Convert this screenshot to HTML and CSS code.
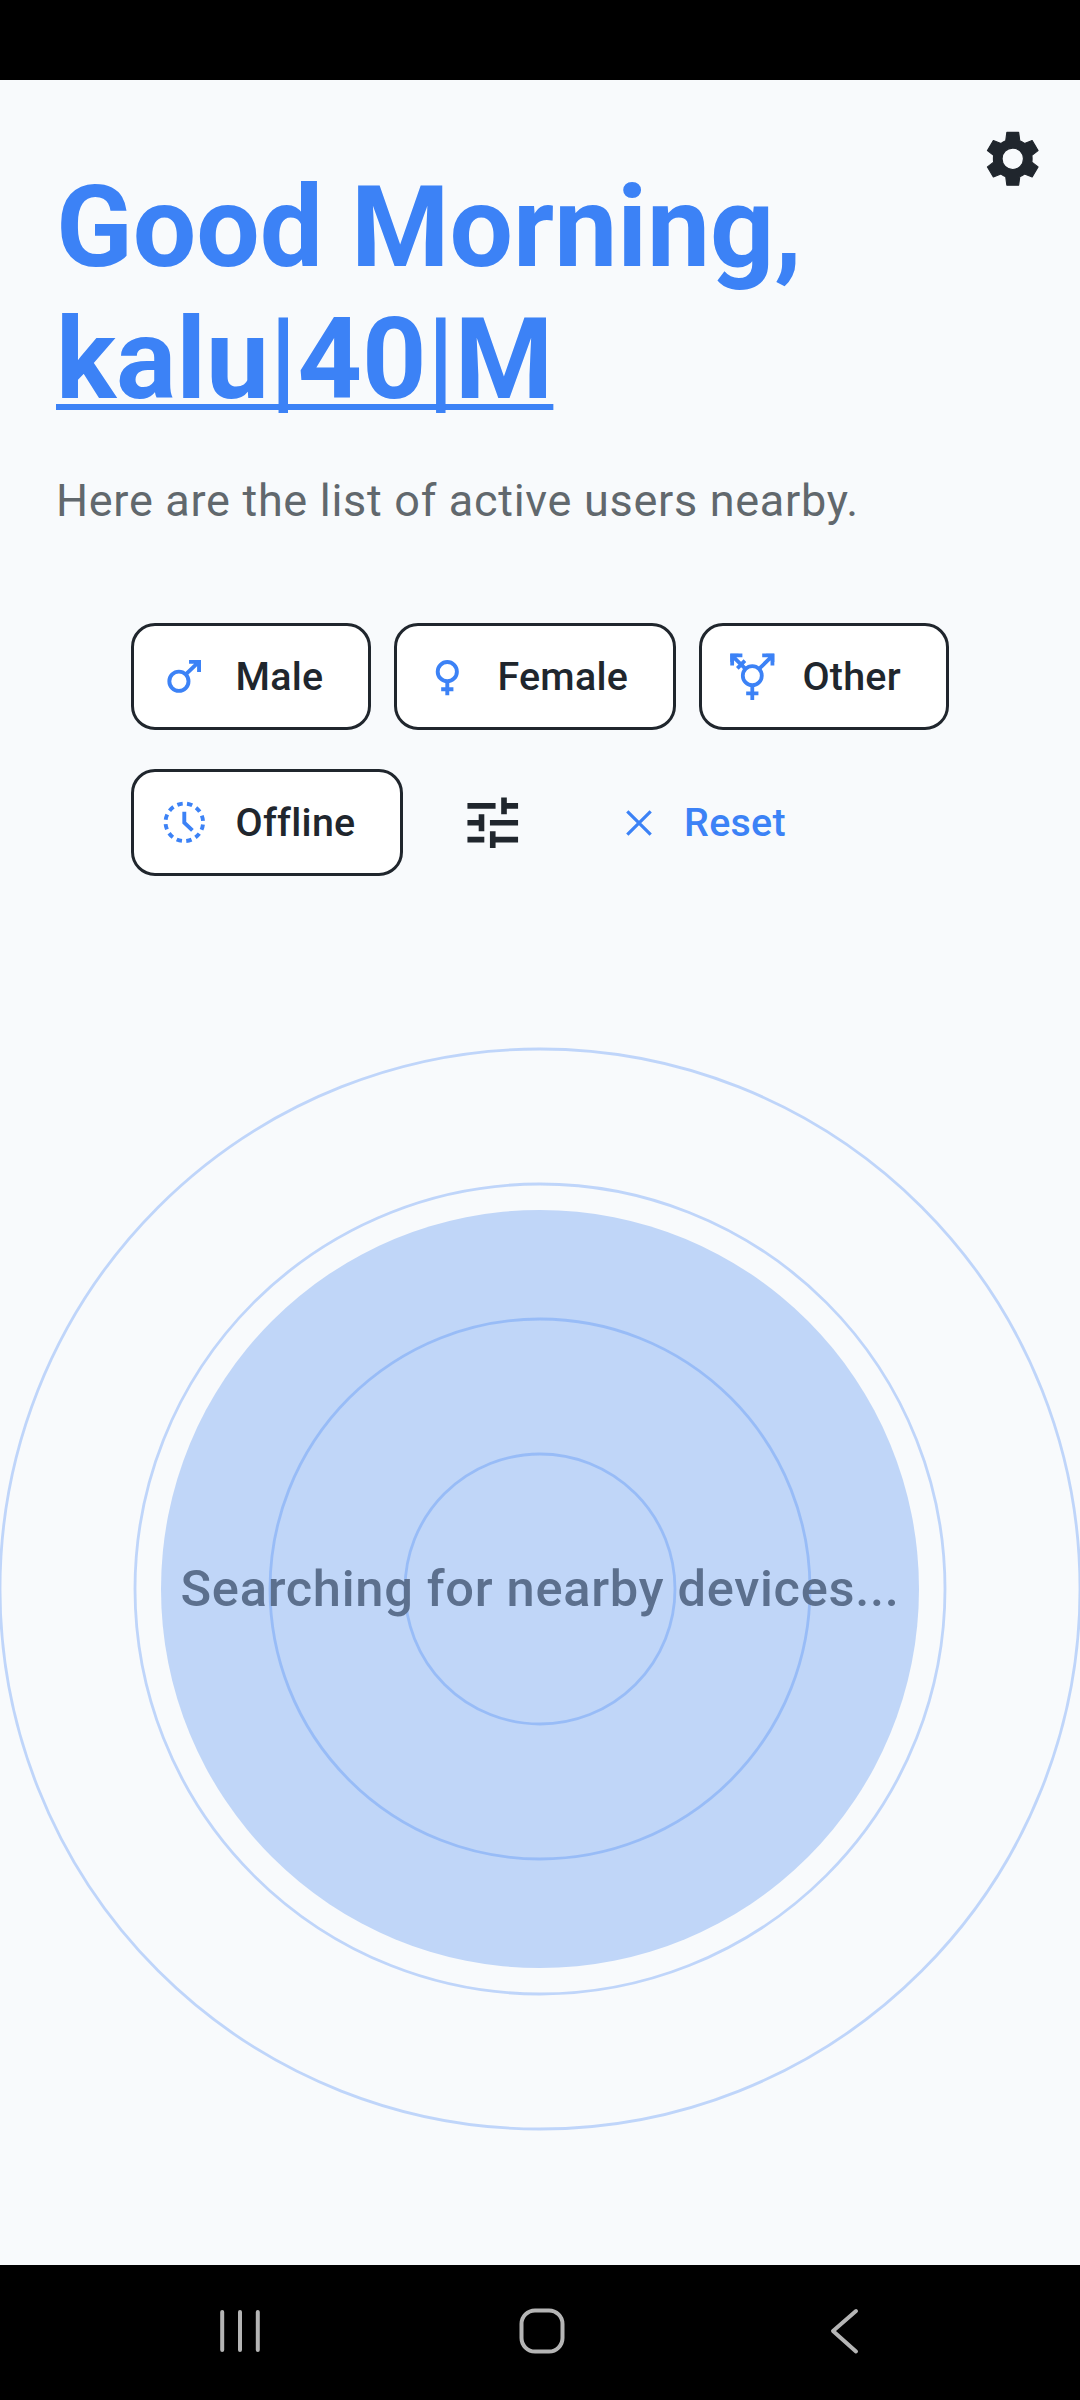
FILE: index.html
```html
<!DOCTYPE html>
<html lang="en">
<head>
<meta charset="utf-8">
<title>Nearby</title>
<link rel="stylesheet" href="styles.css">
</head>
<body>
<div class="status-bar"></div>
<main class="screen">
  <button class="settings" aria-label="Settings">
    <svg viewBox="-12 -12 24 24"><path fill="currentColor" stroke="currentColor" stroke-width=".4" stroke-linejoin="round" fill-rule="evenodd" d="M-2.1-9.4H2.1L2.5-6.4Q3.4-6 4.2-5.4L6.9-6.5L9-2.9L6.8-1.2Q6.95 0 6.8 1.2L9 2.9L6.9 6.5L4.2 5.4Q3.4 6 2.5 6.4L2.1 9.4H-2.1L-2.5 6.4Q-3.4 6-4.2 5.4L-6.9 6.5L-9 2.9L-6.8 1.2Q-6.95 0-6.8-1.2L-9-2.9L-6.9-6.5L-4.2-5.4Q-3.4-6-2.5-6.4ZM0-3.8a3.8 3.8 0 1 0 0 7.6a3.8 3.8 0 1 0 0-7.6Z"/></svg>
  </button>
  <h1 class="greeting">Good Morning,<br><span class="name">kalu|40|M</span></h1>
  <p class="subtitle">Here are the list of active users nearby.</p>
  <div class="filters">
    <div class="filter-row">
      <button class="chip male"><svg class="icon" viewBox="0 0 48 48"><g fill="none" stroke="currentColor" stroke-width="3.7"><circle cx="18.9" cy="28.7" r="9.1"/><path d="M25.4 22.2L38 10M28.5 10.3H38V20"/></g><path fill="currentColor" d="M32 8.5H39.8V16.5Z"/></svg>Male</button>
      <button class="chip female"><svg class="icon" viewBox="0 0 48 48"><g fill="none" stroke="currentColor" stroke-width="3.7"><circle cx="24" cy="19.6" r="9.1"/><path d="M24 28.7V42M18.2 36.3H29.8"/></g></svg>Female</button>
      <button class="chip other"><svg class="icon" viewBox="0 0 48 48"><g fill="none" stroke="currentColor" stroke-width="3.6"><circle cx="24" cy="23.4" r="9"/><path d="M24 32.4V46.4M18.2 40.2H29.8M30.4 17L43 4.6M33.4 4.1H43.1V13.8M17.6 17L5 4.6M14.6 4.1H4.9V13.8M9.8 16.4L17 9.2"/></g><path fill="currentColor" d="M37 2.6H44.9V10.6ZM11 2.6H3.1V10.6Z"/></svg>Other</button>
    </div>
    <div class="filter-row">
      <button class="chip offline"><svg class="icon" viewBox="0 0 48 48"><g fill="none" stroke="currentColor" stroke-width="3.7"><circle cx="24" cy="24" r="17.8" stroke-dasharray="5.1 4.22" stroke-dashoffset="-2.11"/><path d="M24 14V24.3L31.7 31.6"/></g></svg>Offline</button>
      <button class="tune" aria-label="Filters"><svg viewBox="0 0 24 24"><path fill="currentColor" d="M3 17v2h6v-2H3zM3 5v2h10V5H3zm10 16v-2h8v-2h-8v-2h-2v6h2zM7 9v2H3v2h4v2h2V9H7zm14 4v-2H11v2h10zm-6-4h2V7h4V5h-4V3h-2v6z"/></svg></button>
      <button class="reset"><svg viewBox="0 0 26 26"><path d="M1.3 1.3L24.7 24.7M24.7 1.3L1.3 24.7" fill="none" stroke="currentColor" stroke-width="3.2"/></svg>Reset</button>
    </div>
  </div>
  <section class="radar">
    <svg class="rings" viewBox="0 0 1080 1080">
      <circle class="disc" cx="540" cy="540" r="379"/>
      <circle class="ring" cx="540" cy="540" r="135"/>
      <circle class="ring" cx="540" cy="540" r="270"/>
      <circle class="ring" cx="540" cy="540" r="405"/>
      <circle class="ring" cx="540" cy="540" r="540"/>
    </svg>
    <p class="searching">Searching for nearby devices...</p>
  </section>
</main>
<nav class="nav-bar">
  <svg class="recents" viewBox="0 0 44 48"><path d="M2.2 4V42M20 4V42M37.8 4V42"/></svg>
  <svg class="home" viewBox="0 0 46 48"><rect x="2.5" y="2.5" width="41" height="41" rx="13.5"/></svg>
  <svg class="back" viewBox="0 0 30 48"><path d="M26 3L3 23L26 43.5"/></svg>
</nav>
</body>
</html>
```
FILE: styles.css
```css
* { box-sizing: border-box; }
body { margin: 0; width: 1080px; height: 2400px; display: flex; flex-direction: column; font-family: Roboto, sans-serif; background: #000; overflow: hidden; }
h1, p { margin: 0; }
button { font: inherit; border: 0; background: none; padding: 0; color: inherit; }
svg { display: block; flex: none; }
.status-bar { height: 80px; flex: none; background: #000; }
.screen { position: relative; height: 2185px; flex: none; background: #f8fafc; color: #20262d; overflow: hidden; }
.settings { position: absolute; top: 45px; right: 34px; }
.settings svg, .tune svg { width: 67.5px; height: 67.5px; }
.greeting { padding: 81.5px 56px 0; font-size: 112.5px; line-height: 132px; font-weight: 700; color: #3c82f6; }
.name { text-decoration: underline; text-decoration-thickness: 6px; text-underline-offset: 6px; text-decoration-skip-ink: none; }
.subtitle { margin-top: 48px; padding-left: 56px; font-size: 45px; line-height: 53px; letter-spacing: .7px; color: #61686d; white-space: nowrap; }
.filters { margin-top: 96px; padding-left: 131.4px; display: flex; flex-direction: column; gap: 39.5px; }
.filter-row { display: flex; align-items: center; }
.chip { height: 107px; border: 3px solid #20262d; border-radius: 24px; background: #fff; display: flex; align-items: center; padding-left: 25px; gap: 25.5px; font-size: 39.4px; font-weight: 500; letter-spacing: .28px; }
.icon { width: 50.6px; height: 50.6px; color: #3c82f6; overflow: visible; }
.male { width: 239.4px; }
.female { width: 282px; margin-left: 23px; gap: 25px; }
.other { width: 250px; margin-left: 23px; gap: 25px; }
.offline { width: 271.4px; }
.tune { margin-left: 56.3px; }
.reset { margin-left: 99.5px; display: flex; align-items: center; gap: 32px; color: #3c82f6; font-size: 39.4px; font-weight: 500; letter-spacing: .28px; }
.reset svg { width: 26px; height: 26px; }
.radar { margin-top: 173px; display: grid; place-items: center; }
.radar > * { grid-area: 1 / 1; }
.rings { width: 1080px; height: 1080px; overflow: visible; }
.disc { fill: #c0d6f8; }
.ring { fill: none; stroke: #3c82f6; stroke-opacity: .3; stroke-width: 2.8; }
.searching { font-size: 50.6px; line-height: 60px; font-weight: 500; letter-spacing: .7px; color: #5c708e; white-space: nowrap; }
.nav-bar { height: 135px; flex: none; display: flex; align-items: flex-start; padding: 43px 0 0 219.7px; }
.nav-bar svg { height: 48px; fill: none; stroke: #b5b5b5; stroke-width: 4; stroke-linecap: round; stroke-linejoin: round; }
.recents { width: 44px; }
.home { width: 46px; margin-left: 255.5px; }
.back { width: 30px; margin-left: 265px; }
```
